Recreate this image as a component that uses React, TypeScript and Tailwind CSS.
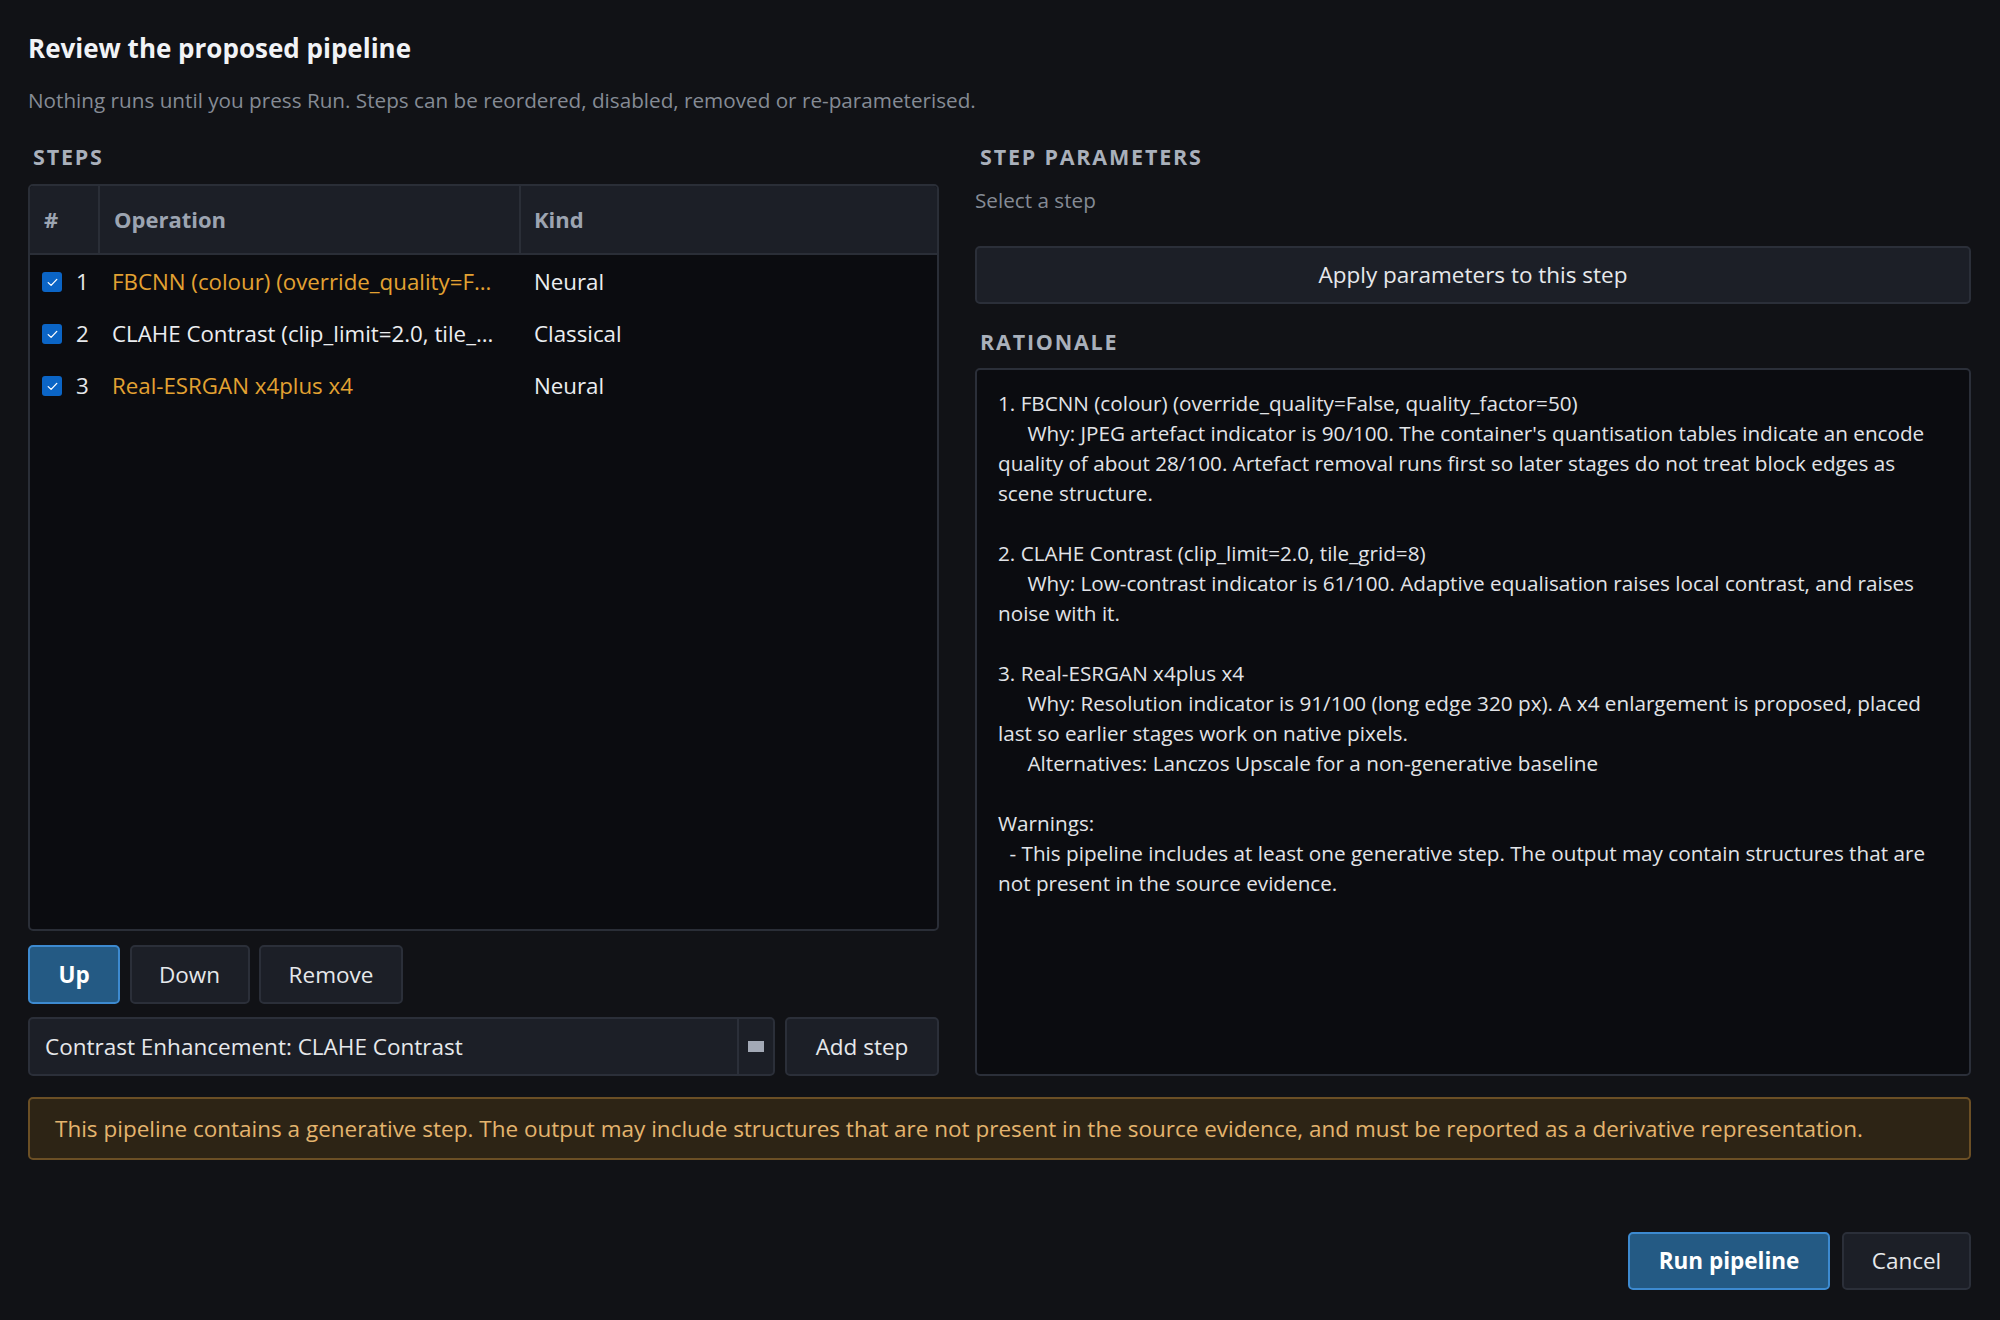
type Step = { n: number; label: string; kind: 'Neural' | 'Classical' };

const steps: Step[] = [
    { n: 1, label: 'FBCNN (colour) (override_quality=False, quality_factor=50)', kind: 'Neural' },
    { n: 2, label: 'CLAHE Contrast (clip_limit=2.0, tile_grid=8)', kind: 'Classical' },
    { n: 3, label: 'Real-ESRGAN x4plus x4', kind: 'Neural' },
];

function Check() {
    return (
        <span className="flex h-[20px] w-[20px] shrink-0 items-center justify-center rounded-[3px] bg-[#0b65c6]">
            <svg width="11" height="9" viewBox="0 0 11 9" fill="none">
                <path d="M1.2 4.6 L4.1 7.4 L9.8 1.4" stroke="#ffffff" strokeWidth="1.3" strokeLinecap="round" strokeLinejoin="round" />
            </svg>
        </span>
    );
}

function SectionLabel({ children }: { children: string }) {
    return (
        <div className="h-[28px] pl-[5px] pt-[2px] text-[21.5px] leading-[26px] font-bold tracking-[1.8px] text-[#a9b0bb]">
            {children}
        </div>
    );
}

function Indent({ w }: { w: string }) {
    return <span className={`inline-block ${w}`} />;
}

export default function App() {
    return (
        <div
            className="h-[1320px] w-full bg-[#111216] pl-[28px] pr-[29px] pt-[31px] text-[#e4e6ea]"
            style={{ fontFamily: '"Open Sans", "Noto Sans", sans-serif' }}
        >
            <h1 className="text-[26px] leading-[34px] font-bold text-[#f1f3f6]">Review the proposed pipeline</h1>
            <p className="mt-[20px] text-[20.7px] leading-[30px] text-[#858b95]">
                Nothing runs until you press Run. Steps can be reordered, disabled, removed or re-parameterised.
            </p>

            <div className="mt-[27px] grid grid-cols-[911px_996px] gap-x-[36px]">
                {/* left column: steps */}
                <div className="flex flex-col">
                    <SectionLabel>STEPS</SectionLabel>
                    <div className="mt-[14px] h-[747px] overflow-hidden rounded-[5px] border-2 border-[#2a2e37] bg-[#0b0c10]">
                        <div className="grid h-[69px] grid-cols-[68px_421px_1fr] border-b-2 border-[#2a2e37] bg-[#1c1f27] text-[22px] font-bold text-[#9ca4b1]">
                            <div className="flex items-center pl-[14px]">#</div>
                            <div className="flex items-center border-l-2 border-[#2a2e37] pl-[14px]">Operation</div>
                            <div className="flex items-center border-l-2 border-[#2a2e37] pl-[13px]">Kind</div>
                        </div>
                        <div className="pt-[1px]">
                            {steps.map(s => (
                                <div key={s.n} className="grid h-[52px] grid-cols-[68px_421px_1fr] items-center text-[22.3px]">
                                    <div className="flex items-center gap-[14px] pl-[12px]">
                                        <Check />
                                        <span className="text-[#e6e8eb]">{s.n}</span>
                                    </div>
                                    <div className={`truncate pl-[14px] pr-[20px] ${s.kind === 'Neural' ? 'text-[#e3a232]' : 'text-[#eceef1]'}`}>
                                        {s.label}
                                    </div>
                                    <div className="pl-[15px] text-[#eceef1]">{s.kind}</div>
                                </div>
                            ))}
                        </div>
                    </div>

                    <div className="mt-[14px] flex h-[59px] gap-[9.5px] text-[22.5px]">
                        <button className="w-[92px] rounded-[5px] border-2 border-[#3d8ad0] bg-[#245a84] font-bold text-white">Up</button>
                        <button className="w-[120px] rounded-[5px] border-2 border-[#2b2f39] bg-[#1c1f27] text-[#e6e8eb]">Down</button>
                        <button className="w-[144px] rounded-[5px] border-2 border-[#2b2f39] bg-[#1c1f27] text-[#e6e8eb]">Remove</button>
                    </div>

                    <div className="mt-[13px] flex h-[59px] gap-[10px] text-[22.5px]">
                        <div className="flex w-[747px] items-stretch rounded-[5px] border-2 border-[#2b2f39] bg-[#1c1f27]">
                            <div className="flex flex-1 items-center pl-[15px] text-[#e6e8eb]">Contrast Enhancement: CLAHE Contrast</div>
                            <div className="flex w-[36px] items-center justify-center border-l-2 border-[#2b2f39]">
                                <span className="block h-[11px] w-[16px] bg-[#a3a9b6]" />
                            </div>
                        </div>
                        <button className="flex-1 rounded-[5px] border-2 border-[#2b2f39] bg-[#1c1f27] text-[#e6e8eb]">Add step</button>
                    </div>
                </div>

                {/* right column: parameters and rationale */}
                <div className="flex flex-col">
                    <SectionLabel>STEP PARAMETERS</SectionLabel>
                    <div className="mt-[15px] text-[20.7px] leading-[30px] text-[#858b95]">Select a step</div>
                    <button className="mt-[31px] h-[58px] w-full rounded-[5px] border-2 border-[#2b2f39] bg-[#1c1f27] text-[22.5px] text-[#e6e8eb]">
                        Apply parameters to this step
                    </button>
                    <div className="mt-[23px]">
                        <SectionLabel>RATIONALE</SectionLabel>
                    </div>
                    <div className="mt-[13px] flex-1 rounded-[5px] border-2 border-[#2b2f39] bg-[#0b0c10] pl-[21px] pr-[21px] pt-[18px] text-[20.7px] leading-[30px] text-[#e2e4e8]">
                        <p>1. FBCNN (colour) (override_quality=False, quality_factor=50)</p>
                        <p>
                            <Indent w="w-[29.5px]" />
                            Why: JPEG artefact indicator is 90/100. The container&apos;s quantisation tables indicate an encode quality of about 28/100. Artefact removal runs first so later stages do not treat block edges as scene structure.
                        </p>
                        <p className="mt-[30px]">2. CLAHE Contrast (clip_limit=2.0, tile_grid=8)</p>
                        <p>
                            <Indent w="w-[29.5px]" />
                            Why: Low-contrast indicator is 61/100. Adaptive equalisation raises local contrast, and raises noise with it.
                        </p>
                        <p className="mt-[30px]">3. Real-ESRGAN x4plus x4</p>
                        <p>
                            <Indent w="w-[29.5px]" />
                            Why: Resolution indicator is 91/100 (long edge 320 px). A x4 enlargement is proposed, placed last so earlier stages work on native pixels.
                        </p>
                        <p>
                            <Indent w="w-[29.5px]" />
                            Alternatives: Lanczos Upscale for a non-generative baseline
                        </p>
                        <p className="mt-[30px]">Warnings:</p>
                        <p>
                            <Indent w="w-[11.5px]" />
                            - This pipeline includes at least one generative step. The output may contain structures that are not present in the source evidence.
                        </p>
                    </div>
                </div>
            </div>

            <div className="mt-[21px] flex h-[63px] items-center rounded-[5px] border-2 border-[#6b4f25] bg-[#2d2415] pl-[25px] text-[22.5px] text-[#e4b46e]">
                This pipeline contains a generative step. The output may include structures that are not present in the source evidence, and must be reported as a derivative representation.
            </div>

            <div className="mt-[72px] flex h-[58px] justify-end gap-[12px] text-[22.5px]">
                <button className="w-[202px] rounded-[5px] border-2 border-[#3d8ad0] bg-[#245a84] font-bold text-white">Run pipeline</button>
                <button className="w-[129px] rounded-[5px] border-2 border-[#2b2f39] bg-[#1c1f27] text-[#e6e8eb]">Cancel</button>
            </div>
        </div>
    );
}
